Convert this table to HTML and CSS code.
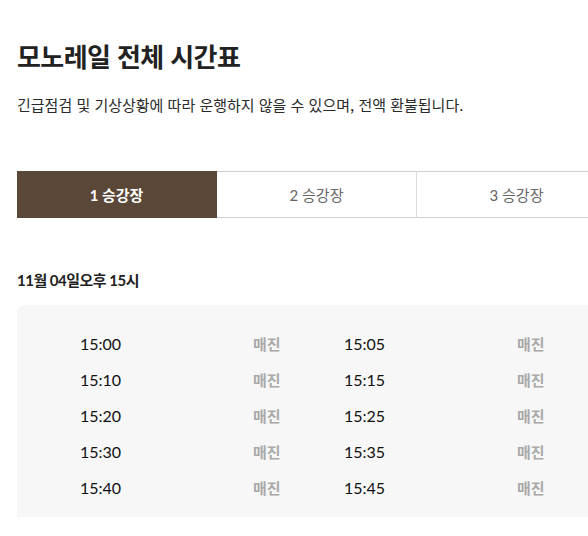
FILE: index.html
```html
<!DOCTYPE html>
<html lang="ko">
<head>
<meta charset="utf-8">
<title>모노레일 전체 시간표</title>
<link rel="stylesheet" href="styles.css">
</head>
<body>
<div class="page">
  <h1 class="title">모노레일 전체 시간표</h1>
  <p class="notice">긴급점검 및 기상상황에 따라 운행하지 않을 수 있으며, 전액 환불됩니다.</p>
  <div class="tabs">
    <div class="tab active">1 승강장</div>
    <div class="tab">2 승강장</div>
    <div class="tab">3 승강장</div>
  </div>
  <h2 class="date">11월 04일오후 15시</h2>
  <div class="panel">
    <div class="grid">
      <div class="cell"><span class="time">15:00</span><span class="status">매진</span></div>
      <div class="cell"><span class="time">15:05</span><span class="status">매진</span></div>
      <div class="cell"><span class="time">15:10</span><span class="status">매진</span></div>
      <div class="cell"><span class="time">15:15</span><span class="status">매진</span></div>
      <div class="cell"><span class="time">15:20</span><span class="status">매진</span></div>
      <div class="cell"><span class="time">15:25</span><span class="status">매진</span></div>
      <div class="cell"><span class="time">15:30</span><span class="status">매진</span></div>
      <div class="cell"><span class="time">15:35</span><span class="status">매진</span></div>
      <div class="cell"><span class="time">15:40</span><span class="status">매진</span></div>
      <div class="cell"><span class="time">15:45</span><span class="status">매진</span></div>
      <div class="cell"><span class="time">15:50</span><span class="status">매진</span></div>
      <div class="cell"><span class="time">15:55</span><span class="status">매진</span></div>
    </div>
  </div>
</div>
</body>
</html>
```

FILE: styles.css
```css
html, body {
  margin: 0;
  padding: 0;
  background: #fff;
  overflow: hidden;
}
body {
  font-family: Lato, "Noto Sans CJK KR", sans-serif;
  color: #222;
}
.page {
  width: 600px;
  padding: 0 0 0 17px;
}
.title {
  margin: 38px 0 0;
  font-size: 26px;
  line-height: 36px;
  font-weight: 700;
  letter-spacing: -0.6px;
  color: #222;
  font-family: "Noto Sans CJK KR", sans-serif;
}
.notice {
  margin: 20px 0 0;
  font-size: 15px;
  line-height: 22px;
  letter-spacing: 0;
  color: #2a2a2a;
  font-family: "Noto Sans CJK KR", sans-serif;
}
.tabs {
  display: flex;
  margin-top: 55px;
  width: 600px;
}
.tab {
  flex: 0 0 200px;
  box-sizing: border-box;
  height: 47px;
  display: flex;
  align-items: center;
  justify-content: center;
  border-top: 1px solid #cfcfcf;
  border-bottom: 1px solid #cfcfcf;
  border-right: 1px solid #dcdcdc;
  font-size: 15px;
  color: #666;
}
.tab.active {
  background: #5b4737;
  color: #fff;
  font-weight: 700;
  border-color: #5b4737;
}
.date {
  margin: 51px 0 0;
  font-size: 15px;
  line-height: 22px;
  font-weight: 700;
  letter-spacing: -0.5px;
  color: #222;
}
.panel {
  margin-top: 14px;
  width: 600px;
  height: 212px;
  box-sizing: border-box;
  background: #f7f7f7;
  border-radius: 8px 8px 0 0;
  overflow: hidden;
  padding-top: 20px;
}
.grid {
  display: grid;
  grid-template-columns: 264px 264px;
}
.cell {
  display: flex;
  align-items: center;
  height: 36px;
  padding-left: 63px;
}
.time {
  width: 173px;
  font-size: 16px;
  color: #111;
}
.status {
  font-family: "Noto Sans CJK KR", sans-serif;
  font-size: 15px;
  font-weight: 700;
  color: #a9a9a9;
}
```
